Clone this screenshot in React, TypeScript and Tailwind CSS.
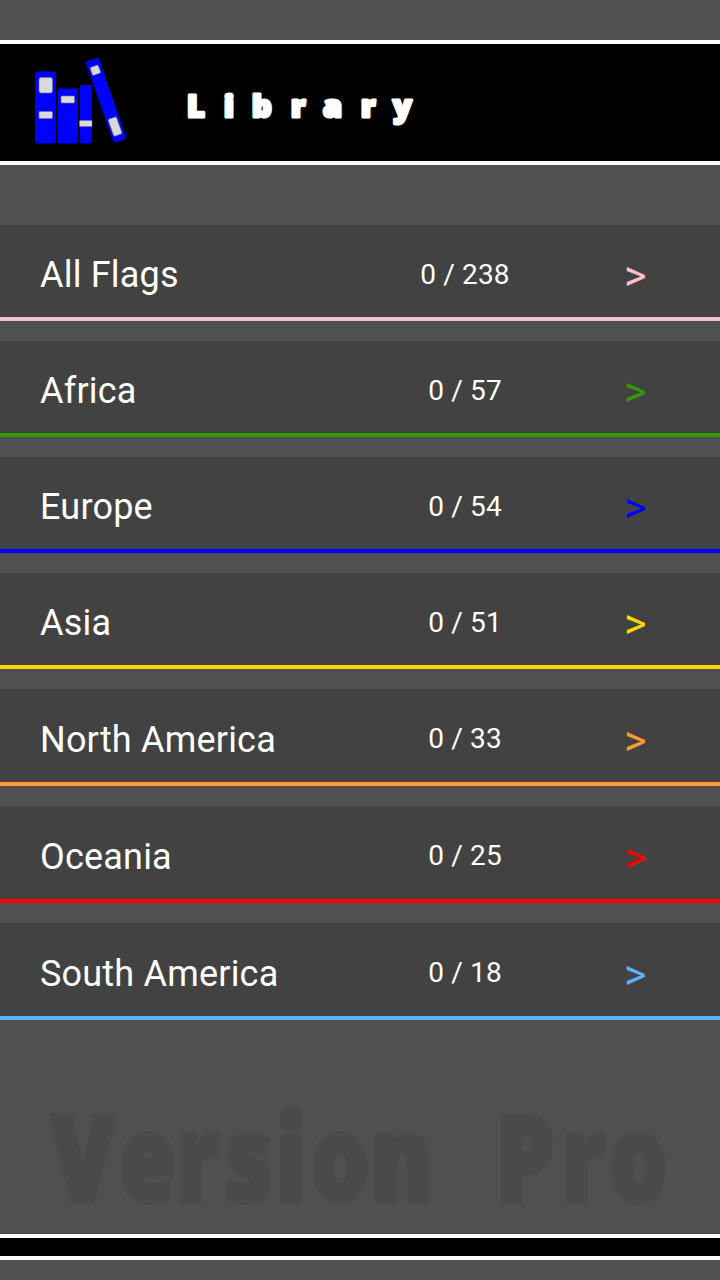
interface Region {
  name: string;
  found: number;
  total: number;
  row: string;
  count: string;
  arrow: string;
}

const regions: Region[] = [
  { name: 'All Flags', found: 0, total: 238, row: 'h-24 border-[#ffc0cb]', count: 'pt-2', arrow: 'text-[#ffc0cb]' },
  { name: 'Africa', found: 0, total: 57, row: 'h-24 border-[#339900]', count: 'pt-2', arrow: 'text-[#339900]' },
  { name: 'Europe', found: 0, total: 54, row: 'h-24 border-[#0000ff]', count: 'pt-2', arrow: 'text-[#0000ff]' },
  { name: 'Asia', found: 0, total: 51, row: 'h-24 border-[#ffd700]', count: 'pt-2', arrow: 'text-[#ffd700]' },
  { name: 'North America', found: 0, total: 33, row: 'h-[97px] border-[#ff9933]', count: 'pt-1.5', arrow: 'text-[#ff9933]' },
  { name: 'Oceania', found: 0, total: 25, row: 'h-[97px] border-[#ff0000]', count: 'pt-1.5', arrow: 'text-[#ff0000]' },
  { name: 'South America', found: 0, total: 18, row: 'h-[97px] border-[#5eb0ff]', count: 'pt-1.5', arrow: 'text-[#5eb0ff]' },
];

function BooksIcon() {
  return (
    <svg width="92" height="88" viewBox="0 0 92 88" className="mb-[3px] shrink-0">
      <g fill="#0000ff">
        <rect x="1" y="14.5" width="21" height="72" rx="2.5" />
        <rect x="23.5" y="31.5" width="20.5" height="55" rx="2.5" />
        <rect x="45.5" y="28" width="12.5" height="58.5" rx="2" />
        <path d="M53.8 4.1 62.2 0.9Q64.3 0.1 65.2 2.5L91.5 79.2Q92.2 81.5 90 82.4L82.1 85.2Q79.8 86 79 83.7L52.2 7Q51.4 5 53.8 4.1Z" />
      </g>
      <g fill="#d9d9d9" stroke="#77778f" strokeWidth="0.6">
        <rect x="5" y="20.5" width="13.5" height="15.5" rx="2" />
        <rect x="5" y="54.5" width="13.5" height="7" rx="1" />
        <rect x="27" y="39" width="13.5" height="7" rx="1" />
        <rect x="45.5" y="63.5" width="12.5" height="6" rx="0.7" />
        <rect x="-4.3" y="-4.2" width="8.6" height="8.4" rx="1.4" transform="translate(61.4 13.2) rotate(-19.5)" />
        <rect x="-4.4" y="-9" width="8.8" height="18" rx="1.5" transform="translate(81.1 69.6) rotate(-19.5)" />
      </g>
    </svg>
  );
}

function Title() {
  return (
    <svg width="250" height="60" viewBox="0 0 250 60" className="ml-[54px] overflow-visible font-['Open_Sans',sans-serif]">
      <text
        x="7 44 72 111 143 181 213"
        y="44"
        fontSize="30.5"
        fontWeight="800"
        fill="#fff"
        stroke="#fff"
        strokeWidth="3.2"
        strokeLinejoin="round"
      >
        Library
      </text>
    </svg>
  );
}

function RegionRow({ region }: { region: Region }) {
  return (
    <button className={`flex w-full items-center border-b-4 bg-[#424242] pl-10 text-left text-white ${region.row}`}>
      <span className="w-[345px] pt-2 text-[36px] leading-[42px] tracking-[0.2px]">{region.name}</span>
      <span className={`w-40 text-center text-[28px] leading-[34px] tracking-[0.15px] ${region.count}`}>
        {region.found} / {region.total}
      </span>
      <span className={`ml-[79px] pt-2 text-[43px] leading-[42px] ${region.arrow}`}>&gt;</span>
    </button>
  );
}

function App() {
  return (
    <div className="flex h-[1280px] w-[720px] flex-col overflow-hidden bg-[#505050] pt-10 font-[Roboto,sans-serif]">
      <header className="flex h-[125px] shrink-0 items-center border-y-4 border-white bg-black pl-[34px]">
        <BooksIcon />
        <Title />
      </header>

      <main className="mt-[60px] flex flex-col gap-5">
        {regions.map((region) => (
          <RegionRow key={region.name} region={region} />
        ))}
      </main>

      <svg width="720" height="214" viewBox="0 0 720 214" className="shrink-0 overflow-visible font-['Open_Sans',sans-serif]">
        <text
          x="65.4 152.6 225.6 288.5 353.8 398.7 475.6 555 635.9 720.5 780.8"
          y="181"
          transform="scale(0.78 1)"
          fontSize="118"
          fontWeight="800"
          fill="#4a4a4a"
          stroke="#4a4a4a"
          strokeWidth="5"
          strokeLinejoin="round"
        >
          Version Pro
        </text>
      </svg>

      <footer className="h-[26px] shrink-0 border-y-4 border-white bg-black" />
    </div>
  );
}

export default App;
